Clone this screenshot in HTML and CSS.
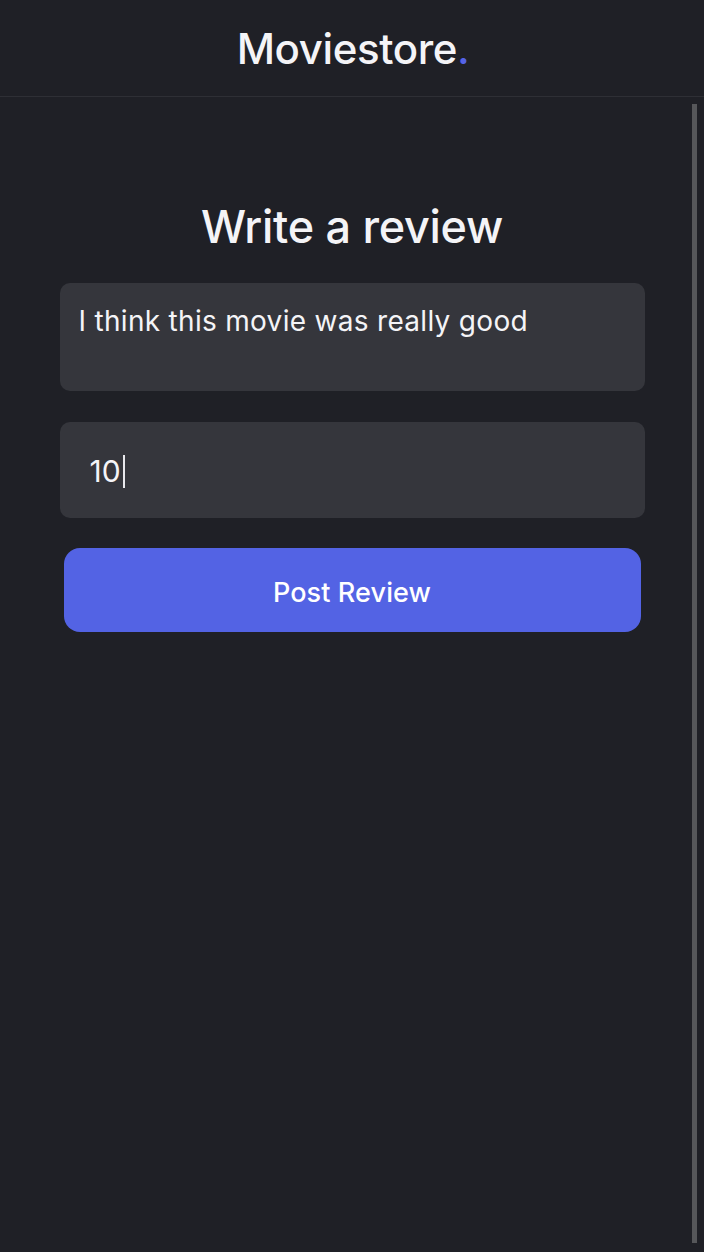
FILE: index.html
```html
<!DOCTYPE html>
<html lang="en">
<head>
<meta charset="utf-8">
<title>Moviestore - Write a review</title>
<link rel="stylesheet" href="styles.css">
</head>
<body>
<header class="topbar">
  <div class="brand">Moviestore<span class="brand-dot">.</span></div>
</header>
<main class="content">
  <h1 class="page-title">Write a review</h1>
  <div class="field field-text">I think this movie was really good</div>
  <div class="field field-score"><span class="score-value">10</span><span class="caret"></span></div>
  <button class="post-btn" type="button">Post Review</button>
</main>
<div class="scrollbar"></div>
</body>
</html>
```

FILE: styles.css
```css
html, body {
  margin: 0;
  padding: 0;
  background: #1f2026;
  height: 100%;
}
body {
  font-family: Inter, "Noto Sans", sans-serif;
  color: #f4f4f7;
  position: relative;
  overflow: hidden;
}
.topbar {
  height: 97px;
  border-bottom: 1px solid #2e2f35;
  display: flex;
  align-items: center;
  justify-content: center;
  box-sizing: border-box;
}
.brand {
  font-size: 42px;
  font-weight: 500;
  line-height: 1;
  letter-spacing: -0.4px;
  padding-top: 2px;
  padding-left: 2px;
}
.brand-dot {
  color: #5563e6;
}
.content {
  width: 585px;
  margin: 0 auto;
  padding-top: 100px;
  display: flex;
  flex-direction: column;
}
.page-title {
  margin: 0 0 26px;
  font-size: 45px;
  font-weight: 500;
  line-height: 60px;
  text-align: center;
  letter-spacing: -0.3px;
}
.field {
  background: #35363c;
  border-radius: 10px;
  box-sizing: border-box;
}
.field-text {
  height: 108px;
  padding: 20px 19px;
  font-size: 28px;
  line-height: 36px;
  font-weight: 400;
  letter-spacing: 0.3px;
}
.field-score {
  margin-top: 31px;
  height: 96px;
  padding: 2px 30px 0;
  display: flex;
  align-items: center;
  font-size: 30px;
  font-weight: 400;
}
.caret {
  display: inline-block;
  width: 2px;
  height: 33px;
  background: #e8e8ec;
  margin-left: 2px;
}
.post-btn {
  margin: 30px 4px 0;
  height: 84px;
  padding: 5px 0 0;
  border: none;
  border-radius: 16px;
  background: #5363e4;
  color: #ffffff;
  font-family: Inter, "Noto Sans", sans-serif;
  font-size: 27px;
  font-weight: 500;
  letter-spacing: 0.1px;
  cursor: pointer;
}
.scrollbar {
  position: absolute;
  right: 7px;
  top: 104px;
  width: 5px;
  height: 1139px;
  background: #56575a;
}
```
